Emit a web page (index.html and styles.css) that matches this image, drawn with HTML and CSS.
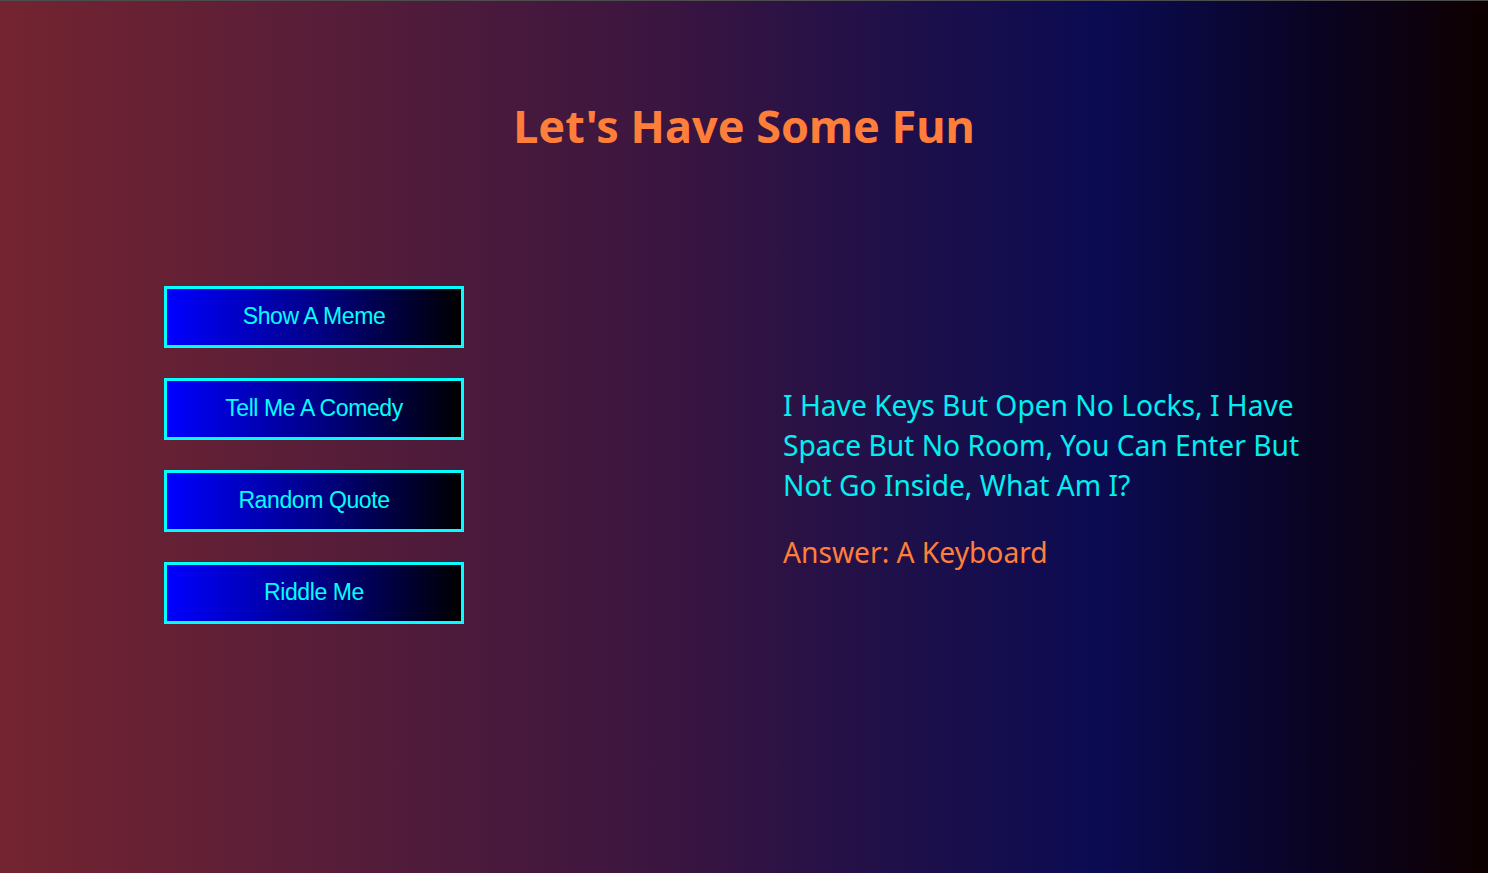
FILE: index.html
```html
<!DOCTYPE html>
<html lang="en">
<head>
<meta charset="utf-8">
<title>Let's Have Some Fun</title>
<link rel="stylesheet" href="styles.css">
</head>
<body>
<div class="page">
  <h1 class="title">Let's Have Some Fun</h1>
  <main class="content">
    <div class="buttons">
      <button class="btn">Show A Meme</button>
      <button class="btn">Tell Me A Comedy</button>
      <button class="btn">Random Quote</button>
      <button class="btn">Riddle Me</button>
    </div>
    <div class="output">
      <p class="riddle">I Have Keys But Open No Locks, I Have Space But No Room, You Can Enter But Not Go Inside, What Am I?</p>
      <p class="answer">Answer: A Keyboard</p>
    </div>
  </main>
</div>
</body>
</html>
```
FILE: styles.css
```css
* { box-sizing: border-box; }
html, body { margin: 0; padding: 0; height: 100%; }
body {
  font-family: "Noto Sans", "Open Sans", sans-serif;
  background: linear-gradient(90deg, #742430 0%, #5a1e38 20%, #3a1540 45%, #1c0f4a 62%, #0b0b52 74%, #0a0424 88%, #0e0000 100%);
  border-top: 1px solid #4d4d4d;
  overflow: hidden;
}
.page {
  height: 872px;
  display: flex;
  flex-direction: column;
}
.title {
  margin: 0;
  padding-top: 97px;
  text-align: center;
  font-size: 45px;
  font-weight: 700;
  line-height: 56px;
  color: #ff7f3a;
}
.content {
  display: flex;
  align-items: center;
  padding-top: 132px;
  padding-left: 164px;
}
.buttons {
  display: flex;
  flex-direction: column;
  gap: 30px;
  width: 300px;
}
.btn {
  height: 62px;
  width: 300px;
  border: 3px solid #00ffff;
  background: linear-gradient(90deg, #0000ff 0%, #00008a 50%, #000000 100%);
  color: #00ffff;
  font-family: "Liberation Sans", Arial, sans-serif;
  font-size: 23px;
  letter-spacing: -0.4px;
  padding: 0 0 2px;
  cursor: pointer;
}
.output {
  margin-left: 319px;
  width: 540px;
  padding-top: 46px;
}
.riddle {
  margin: 0;
  font-size: 28.2px;
  line-height: 40px;
  color: #00f0f0;
}
.answer {
  margin: 27px 0 0;
  font-size: 28.2px;
  line-height: 40px;
  color: #ff7f3a;
}
```
